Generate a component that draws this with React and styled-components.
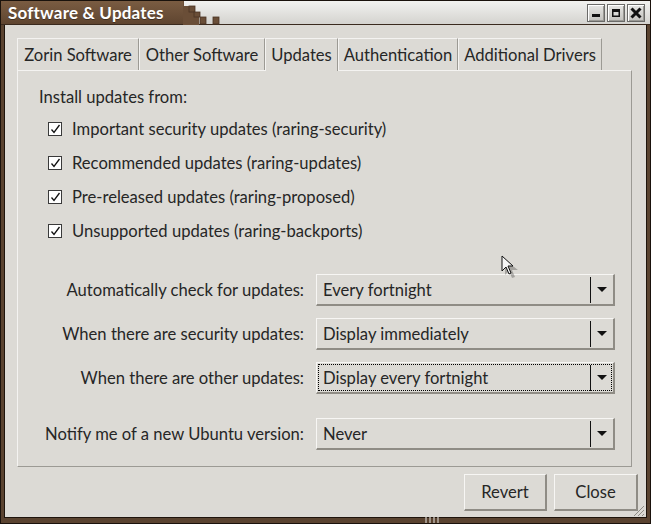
import React from "react";
import styled, { createGlobalStyle, css } from "styled-components";

const Global = createGlobalStyle`
  html, body { margin: 0; padding: 0; background: #000; }
  body { font-family: "Lato", "Open Sans", sans-serif; }
  * { box-sizing: border-box; }
`;

const FONT = `"Lato", "Open Sans", "Liberation Sans", sans-serif`;

const Window = styled.div`
  position: relative;
  width: 651px;
  height: 524px;
  display: flex;
  flex-direction: column;
  background: #5a4330;
  border: 1px solid #1a120c;
  overflow: hidden;
`;

const TitleBar = styled.div`
  height: 24px;
  display: flex;
  align-items: stretch;
  background: linear-gradient(#f2f2f0, #d4d3cf);
  border-bottom: 1px solid #3a2a1e;
`;

const TitleBrown = styled.div`
  display: flex;
  align-items: center;
  padding-left: 7px;
  width: 182px;
  background: linear-gradient(#7a5c42, #5f4530);
  color: #fff;
  font-family: ${FONT};
  font-weight: 700;
  font-size: 17px;
  letter-spacing: 0.2px;
  text-shadow: 0 1px 0 rgba(0,0,0,0.35);
`;

const Stairs = styled.svg`
  display: block;
  flex: none;
`;

const Spacer = styled.div`
  flex: 1;
`;

const WinButtons = styled.div`
  display: flex;
  gap: 2px;
  padding: 3px 5px 0 0;
`;

const WinButton = styled.div`
  width: 18px;
  height: 18px;
  display: flex;
  align-items: center;
  justify-content: center;
  background: linear-gradient(#e6e6e4, #c2c1bd);
  border: 1px solid #6a6a68;
  box-shadow: inset 1px 1px 0 #fff, inset -1px -1px 0 #9a9994;
`;

const Body = styled.div`
  flex: 1;
  display: flex;
  flex-direction: column;
  margin: 0 3px 5px 3px;
  border-left: 1px solid #1e140c;
  border-right: 1px solid #1e140c;
  border-bottom: 1px solid #1e140c;
  background: #dcdad5;
  padding: 13px 8px 0 12px;
  color: #262626;
  font-family: ${FONT};
  font-size: 16.6px;
`;

const Notebook = styled.div`
  display: flex;
  flex-direction: column;
  margin-right: 6px;
`;

const TabRow = styled.div`
  display: flex;
  align-items: flex-end;
  height: 32px;
`;

const Tab = styled.div`
  width: ${(p) => p.$w}px;
  height: 32px;
  display: flex;
  align-items: center;
  justify-content: center;
  white-space: nowrap;
  background: #dcdad5;
  border-top: 1px solid #f4f3f1;
  border-left: 1px solid #f4f3f1;
  border-right: 1px solid #9c9a94;
  ${(p) =>
    p.$active &&
    css`
      position: relative;
      z-index: 1;
      margin-bottom: -1px;
      height: 33px;
      padding-bottom: 1px;
    `}
`;

const Panel = styled.div`
  height: 397px;
  border-top: 1px solid #f4f3f1;
  border-left: 1px solid #f4f3f1;
  border-right: 1px solid #9c9a94;
  border-bottom: 1px solid #9c9a94;
  padding: 16px 16px 0 21px;
  display: flex;
  flex-direction: column;
`;

const Heading = styled.div`
  height: 20px;
  line-height: 20px;
`;

const CheckList = styled.div`
  display: flex;
  flex-direction: column;
  padding: 5px 0 0 9px;
`;

const CheckRow = styled.label`
  height: 34px;
  display: flex;
  align-items: center;
  gap: 10px;
`;

const Box = styled.span`
  width: 14px;
  height: 14px;
  flex: none;
  background: #fff;
  border: 1px solid #3a3a3a;
  display: flex;
  align-items: center;
  justify-content: center;
`;

const OptionGrid = styled.div`
  display: grid;
  grid-template-columns: 1fr 299px;
  grid-template-rows: 32px 32px 32px 44px;
  column-gap: 12px;
  row-gap: 12px;
  align-items: end;
  margin-top: 26px;
`;

const OptLabel = styled.div`
  height: 32px;
  display: flex;
  align-items: center;
  justify-content: flex-end;
  white-space: nowrap;
`;

const Combo = styled.div`
  position: relative;
  display: flex;
  align-items: center;
  height: 32px;
  padding: 0 0 0 6px;
  background: #dcdad5;
  border-top: 1px solid #f7f6f4;
  border-left: 1px solid #f7f6f4;
  border-right: 2px solid #8f8c85;
  border-bottom: 2px solid #8f8c85;
  ${(p) =>
    p.$focus &&
    css`
      &::after {
        content: "";
        position: absolute;
        inset: 1px;
        border: 1px dotted #000;
        pointer-events: none;
      }
    `}
`;

const ComboText = styled.span`
  flex: 1;
  white-space: nowrap;
`;

const ComboSep = styled.span`
  width: 1px;
  height: 26px;
  background: #111;
  margin-right: 6px;
`;

const Arrow = styled.span`
  width: 0;
  height: 0;
  border-left: 5px solid transparent;
  border-right: 5px solid transparent;
  border-top: 5px solid #111;
  margin-right: 6px;
`;

const ActionArea = styled.div`
  display: flex;
  justify-content: flex-end;
  gap: 7px;
  padding-top: 7px;
`;

const Button = styled.div`
  width: ${(p) => p.$w}px;
  height: 37px;
  display: flex;
  align-items: center;
  justify-content: center;
  background: #dcdad5;
  border-top: 1px solid #f7f6f4;
  border-left: 1px solid #f7f6f4;
  border-right: 2px solid #8f8c85;
  border-bottom: 2px solid #8f8c85;
`;

const Grip = styled.svg`
  position: absolute;
  right: 5px;
  bottom: 6px;
`;

const Cursor = styled.svg`
  position: absolute;
  left: 500px;
  top: 254px;
`;

const BottomMarks = styled.svg`
  position: absolute;
  left: 423px;
  bottom: 0;
`;

function Check() {
  return (
    <svg width="11" height="10" viewBox="0 0 11 10">
      <polyline points="1.5,5.5 4,8.5 9.5,1" fill="none" stroke="#111" strokeWidth="1.3" />
    </svg>
  );
}

const checks = [
  "Important security updates (raring-security)",
  "Recommended updates (raring-updates)",
  "Pre-released updates (raring-proposed)",
  "Unsupported updates (raring-backports)",
];

const options = [
  ["Automatically check for updates:", "Every fortnight"],
  ["When there are security updates:", "Display immediately"],
  ["When there are other updates:", "Display every fortnight", true],
  ["Notify me of a new Ubuntu version:", "Never"],
];

const tabs = [
  ["Zorin Software", 122],
  ["Other Software", 126],
  ["Updates", 73, true],
  ["Authentication", 120],
  ["Additional Drivers", 144],
];

export default function App() {
  return (
    <>
      <Global />
      <Window>
        <TitleBar>
          <TitleBrown>Software &amp; Updates</TitleBrown>
          <Stairs width="45" height="24" viewBox="0 0 45 24">
            <polygon points="0,0 1,0 1,5 6,5 6,10 11,10 11,16 16,16 16,24 0,24" fill="#6a4e37" />
            <rect x="6" y="5" width="6" height="6" fill="#6a4e37" stroke="#4a3424" strokeWidth="0.8" />
            <rect x="11" y="11" width="6" height="5" fill="#6a4e37" stroke="#4a3424" strokeWidth="0.8" />
            <rect x="17" y="16" width="6" height="7" fill="#6a4e37" stroke="#4a3424" strokeWidth="0.8" />
            <rect x="30" y="16" width="6" height="7" fill="#6a4e37" stroke="#4a3424" strokeWidth="0.8" />
          </Stairs>
          <Spacer />
          <WinButtons>
            <WinButton>
              <svg width="10" height="10" viewBox="0 0 10 10"><rect x="1" y="6" width="8" height="3" fill="#111" /></svg>
            </WinButton>
            <WinButton>
              <svg width="10" height="10" viewBox="0 0 10 10"><rect x="1" y="1" width="8" height="8" fill="#111" /><rect x="2.5" y="4" width="5" height="3.5" fill="#d8d8d6" /></svg>
            </WinButton>
            <WinButton>
              <svg width="12" height="12" viewBox="0 0 12 12"><path d="M1.5 1.5 L10.5 10.5 M10.5 1.5 L1.5 10.5" stroke="#111" strokeWidth="3" /></svg>
            </WinButton>
          </WinButtons>
        </TitleBar>
        <Body>
          <Notebook>
            <TabRow>
              {tabs.map(([t, w, a]) => (
                <Tab key={t} $w={w} $active={a}>{t}</Tab>
              ))}
            </TabRow>
            <Panel>
              <Heading>Install updates from:</Heading>
              <CheckList>
                {checks.map((c) => (
                  <CheckRow key={c}>
                    <Box><Check /></Box>
                    {c}
                  </CheckRow>
                ))}
              </CheckList>
              <OptionGrid>
                {options.map(([l, v, f]) => (
                  <React.Fragment key={l}>
                    <OptLabel>{l}</OptLabel>
                    <Combo $focus={f}>
                      <ComboText>{v}</ComboText>
                      <ComboSep />
                      <Arrow />
                    </Combo>
                  </React.Fragment>
                ))}
              </OptionGrid>
            </Panel>
          </Notebook>
          <ActionArea>
            <Button $w={83}>Revert</Button>
            <Button $w={84}>Close</Button>
          </ActionArea>
        </Body>
        <Grip width="14" height="14" viewBox="0 0 14 14">
          <path d="M13 3 L3 13 M13 7 L7 13 M13 11 L11 13" stroke="#8f8c85" strokeWidth="1" />
        </Grip>
        <BottomMarks width="18" height="6" viewBox="0 0 18 6">
          <path d="M2 0V6 M6 0V6 M10 0V6 M14 0V6" stroke="#b8b0a6" strokeWidth="1.5" />
        </BottomMarks>
        <Cursor width="20" height="26" viewBox="0 0 20 26">
          <path d="M4 5 L4 20 L8 16 L11 23 L14 22 L11 15 L17 15 Z" fill="#000" opacity="0.25" />
          <path d="M1 1 L1 16 L5 12 L8 19 L10 18 L7 11 L12 11 Z" fill="#f4f4f4" stroke="#111" strokeWidth="1" strokeLinejoin="round" />
        </Cursor>
      </Window>
    </>
  );
}
